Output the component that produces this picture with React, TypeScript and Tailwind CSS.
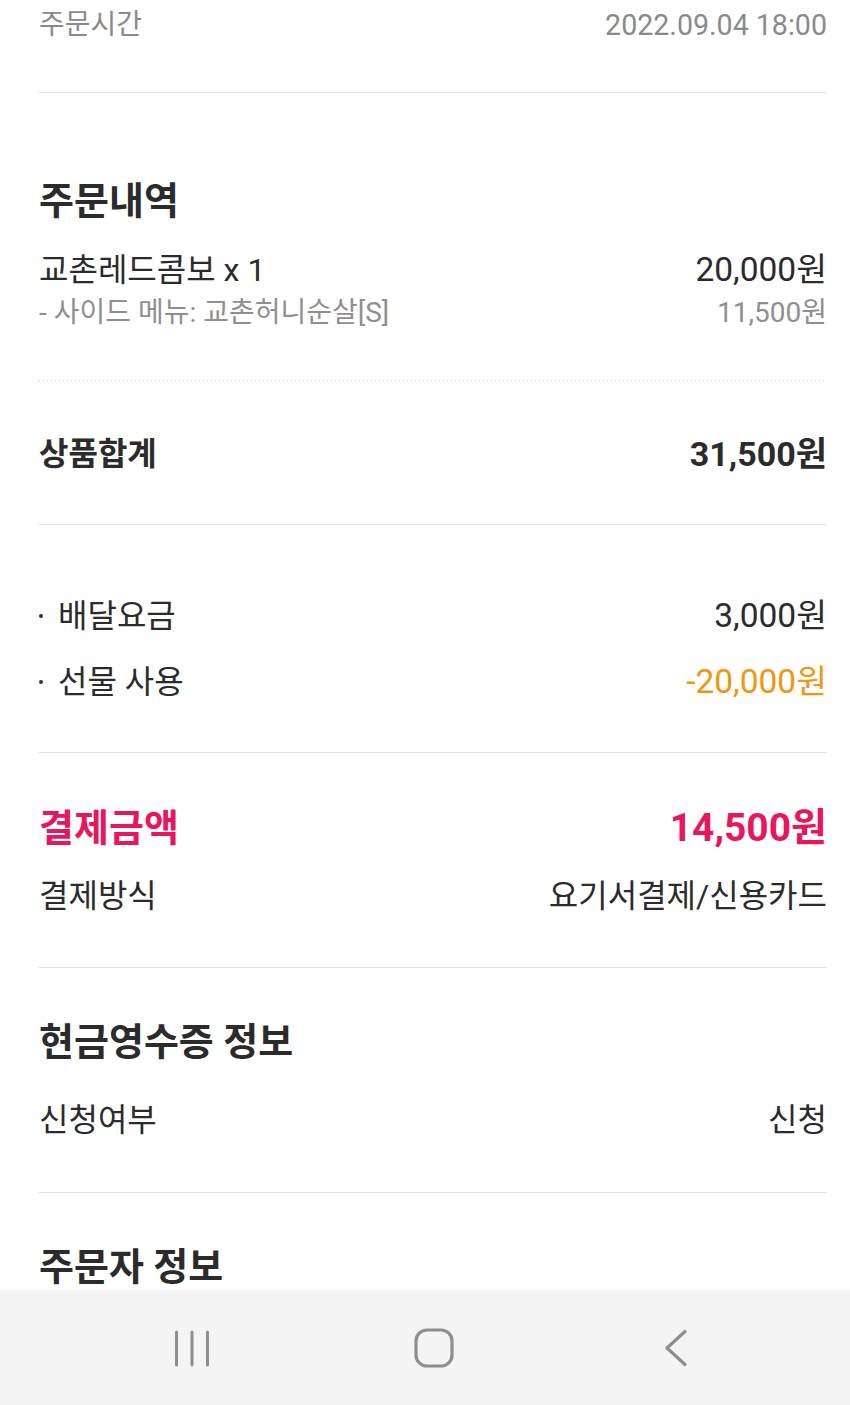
import React from "react";

const FONT = "font-['Roboto','Noto_Sans_CJK_KR',sans-serif]";

function Row({
  left,
  right,
  h,
  className,
  rightClass,
}: {
  left: React.ReactNode;
  right: React.ReactNode;
  h: string;
  className?: string;
  rightClass?: string;
}) {
  return (
    <div className={`flex items-center justify-between ${h} ${className ?? ""}`}>
      <div>{left}</div>
      <div className={rightClass}>{right}</div>
    </div>
  );
}

function Line() {
  return <div className="h-px bg-[#e2e2e2]" />;
}

function Bullet({ children }: { children: React.ReactNode }) {
  return (
    <span className="flex items-center">
      <span className="mr-[15px] inline-block h-[4px] w-[4px] rounded-full bg-[#333]" />
      {children}
    </span>
  );
}

export default function App() {
  return (
    <div className={`flex h-[1405px] w-[850px] flex-col overflow-hidden bg-white ${FONT}`}>
      <div className="flex-1 overflow-hidden pl-[39px] pr-[23px]">
        <Row
          h="h-[50px]"
          className="text-[28px] text-[#8a8a8a]"
          left="주문시간"
          right="2022.09.04 18:00"
          rightClass="text-[28.6px]"
        />
        <div className="h-[42px]" />
        <Line />

        <div className="h-[83px]" />
        <div className="flex h-[50px] items-center text-[38px] font-bold text-[#2b2b2b]">주문내역</div>
        <div className="h-[22px]" />
        <Row
          h="h-[44px]"
          className="text-[32px] text-[#2b2b2b]"
          left="교촌레드콤보 x 1"
          right="20,000원"
          rightClass="text-[33.5px]"
        />
        <div className="h-[3px]" />
        <Row
          h="h-[36px]"
          className="text-[28px] text-[#8f8f8f]"
          left="- 사이드 메뉴: 교촌허니순살[S]"
          right="11,500원"
        />
        <div className="h-[49px]" />
        <div className="h-px bg-[linear-gradient(to_right,#c4c4c4_1px,transparent_1px)] bg-[length:4px_1px]" />

        <div className="h-[48px]" />
        <Row
          h="h-[50px]"
          className="text-[32px] font-bold text-[#2b2b2b]"
          left="상품합계"
          right="31,500원"
          rightClass="text-[34px]"
        />
        <div className="h-[45px]" />
        <Line />

        <div className="h-[69px]" />
        <Row
          h="h-[44px]"
          className="text-[32px] text-[#2b2b2b]"
          left={<Bullet>배달요금</Bullet>}
          right="3,000원"
          rightClass="text-[33.5px]"
        />
        <div className="h-[22px]" />
        <Row
          h="h-[44px]"
          className="text-[32px] text-[#2b2b2b]"
          left={<Bullet>선물 사용</Bullet>}
          right="-20,000원"
          rightClass="text-[33.5px] text-[#f0960f]"
        />
        <div className="h-[48px]" />
        <Line />

        <div className="h-[50px]" />
        <Row
          h="h-[50px]"
          className="text-[38px] font-bold text-[#e8175d]"
          left="결제금액"
          right="14,500원"
          rightClass="text-[39px]"
        />
        <div className="h-[21px]" />
        <Row h="h-[44px]" className="text-[32px] text-[#2b2b2b]" left="결제방식" right="요기서결제/신용카드" />
        <div className="h-[49px]" />
        <Line />

        <div className="h-[49px]" />
        <div className="flex h-[50px] items-center text-[38px] font-bold text-[#2b2b2b]">현금영수증 정보</div>
        <div className="h-[31px]" />
        <Row h="h-[44px]" className="text-[32px] text-[#2b2b2b]" left="신청여부" right="신청" />
        <div className="h-[50px]" />
        <Line />

        <div className="h-[49px]" />
        <div className="flex h-[50px] items-center text-[38px] font-bold text-[#2b2b2b]">주문자 정보</div>
      </div>

      <div className="flex h-[115px] items-center justify-center bg-[#f4f4f4] pl-[18px]">
        <div className="flex w-[242px] justify-center">
          <svg width="36" height="38" viewBox="0 0 36 38">
            <g stroke="#8e8e8e" strokeWidth="3" strokeLinecap="round">
              <line x1="2.5" y1="3" x2="2.5" y2="36" />
              <line x1="18" y1="3" x2="18" y2="36" />
              <line x1="33.5" y1="3" x2="33.5" y2="36" />
            </g>
          </svg>
        </div>
        <div className="flex w-[242px] justify-center">
          <svg width="40" height="40" viewBox="0 0 40 40">
            <rect x="2" y="2" width="36" height="36" rx="11" fill="none" stroke="#8e8e8e" strokeWidth="3.2" />
          </svg>
        </div>
        <div className="flex w-[242px] justify-center">
          <svg width="24" height="38" viewBox="0 0 24 38">
            <polyline
              points="21,2.5 3,19 21,35.5"
              fill="none"
              stroke="#8e8e8e"
              strokeWidth="3.2"
              strokeLinecap="round"
              strokeLinejoin="round"
            />
          </svg>
        </div>
      </div>
    </div>
  );
}
